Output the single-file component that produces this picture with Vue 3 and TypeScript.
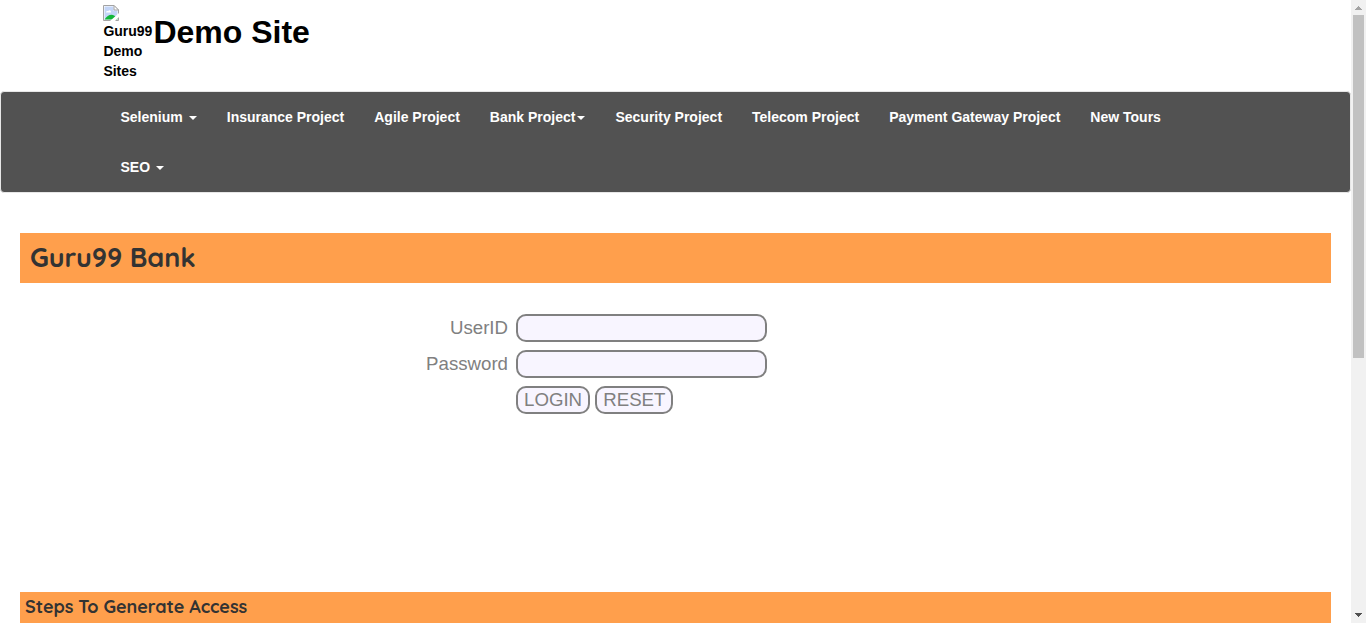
<script setup lang="ts">
import { ref } from 'vue'

interface NavItem {
  label: string
  caret?: 'spaced' | 'tight'
}

const navItems: NavItem[] = [
  { label: 'Selenium', caret: 'spaced' },
  { label: 'Insurance Project' },
  { label: 'Agile Project' },
  { label: 'Bank Project', caret: 'tight' },
  { label: 'Security Project' },
  { label: 'Telecom Project' },
  { label: 'Payment Gateway Project' },
  { label: 'New Tours' },
  { label: 'SEO', caret: 'spaced' },
]

const userId = ref('')
const password = ref('')

function reset(): void {
  userId.value = ''
  password.value = ''
}
</script>

<template>
  <div class="viewport">
    <div class="page">
      <header class="masthead">
        <div class="logo">
          <svg class="logo-icon" width="16" height="16" viewBox="0 0 16 16">
            <path d="M.5.5H11L15.500 5V15.500H.5Z" fill="#fff" stroke="#a3a3a3" />
            <path d="M1.500 1.500H10.500V5.500H14.500V14.500H1.500Z" fill="#c3d5f7" />
            <path d="M3 7.500C3 5.800 5 5.800 5.300 6.200C5.800 4.700 8.200 5 8 7.500Z" fill="#fff" />
            <path d="M1.500 14.500C3.500 11.500 6 9.700 8.500 9.700C10.500 9.700 12.500 11.200 14.500 13V14.500Z" fill="#12b73b" />
            <path d="M7 16L16 8V12L12 16Z" fill="#fff" />
            <path d="M11 .5V5H15.500Z" fill="#fff" stroke="#a3a3a3" />
          </svg>
          <span class="logo-text">Guru99 Demo Sites</span>
        </div>
        <h1 class="site-title">Demo Site</h1>
      </header>

      <nav class="navbar">
        <ul class="nav-list">
          <li v-for="item in navItems" :key="item.label">
            <a class="nav-link">{{ item.label }}<i v-if="item.caret" class="caret" :class="item.caret"></i></a>
          </li>
        </ul>
      </nav>

      <h2 class="bar bank-title"><span>Guru99 Bank</span></h2>

      <form class="login" @submit.prevent>
        <label for="uid">UserID</label>
        <input id="uid" v-model="userId" type="text" />
        <label for="pwd">Password</label>
        <input id="pwd" v-model="password" type="password" />
        <div class="actions">
          <button type="submit">LOGIN</button>
          <button type="button" @click="reset">RESET</button>
        </div>
      </form>

      <h4 class="bar steps-title"><span>Steps To Generate Access</span></h4>
    </div>

    <div class="scrollbar">
      <svg class="arrow" width="15" height="15" viewBox="0 0 15 15" shape-rendering="crispEdges">
        <path d="M7 6h1v1h1v1h1v1h1v1H4V9h1V8h1V7h1z" fill="#a3a3a3" />
      </svg>
      <div class="thumb"></div>
      <svg class="arrow" width="15" height="15" viewBox="0 0 15 15" shape-rendering="crispEdges">
        <path d="M4 5h7v1h-1v1h-1v1h-1v1h-1v-1h-1v-1h-1v-1h-1z" fill="#505050" />
      </svg>
    </div>
  </div>
</template>

<style>
body {
  overflow: hidden;
  background: #fff;
}
</style>

<style scoped>
* {
  box-sizing: border-box;
}

.viewport {
  display: flex;
  height: 623px;
  overflow: hidden;
  font-family: "Liberation Sans", Arial, sans-serif;
  font-size: 14px;
  line-height: 20px;
}

.page {
  flex: 1;
  min-width: 0;
}

.masthead {
  display: flex;
  height: 91px;
  padding: 5px 0 0 103.4px;
  color: #000;
}

.logo {
  width: 50px;
  font-weight: 700;
}

.logo-icon {
  display: block;
  margin-left: -0.4px;
}

.logo-text {
  display: block;
}

.site-title {
  margin: 10px 0 0;
  font-size: 32px;
  line-height: 35px;
  font-weight: 700;
}

.navbar {
  height: 102px;
  border: 1px solid #e7e7e7;
  border-radius: 4px;
  background: #525252;
}

.nav-list {
  display: flex;
  flex-wrap: wrap;
  width: 1140px;
  margin: 0 auto;
  padding: 0;
  list-style: none;
}

.nav-link {
  display: block;
  padding: 15px;
  color: #fff;
  font-weight: 700;
  white-space: nowrap;
}

.caret {
  display: inline-block;
  margin-left: 2px;
  border-top: 4px solid #fff;
  border-right: 4px solid transparent;
  border-left: 4px solid transparent;
  vertical-align: middle;
}

.caret.spaced {
  margin-left: 6px;
}

.bar {
  margin: 0 20px;
  background: #ff9f4c;
  color: #333;
  font-family: Quicksand, Lato, sans-serif;
  font-weight: 700;
}

.bank-title {
  height: 50px;
  margin-top: 40px;
  padding-left: 10px;
  font-size: 27px;
  line-height: 49px;
  letter-spacing: -0.1px;
}

.login {
  display: grid;
  grid-template-columns: 508px 251px;
  grid-auto-rows: 28px;
  gap: 8px;
  height: 309px;
  padding-top: 31px;
  color: #808080;
  font-size: 18.667px;
  line-height: 28px;
}

.login label {
  text-align: right;
}

.login input,
.login button {
  height: 28px;
  margin: 0;
  border: 2px solid #808080;
  border-radius: 10px;
  background: #f8f5ff;
  color: #808080;
  font: inherit;
  line-height: 22px;
  outline: none;
}

.login input {
  width: 251px;
  padding: 1px 6px;
}

.login button {
  padding: 1px 6px;
}

.actions {
  display: flex;
  grid-column: 2;
  gap: 5.2px;
}

.steps-title {
  height: 31px;
  padding-left: 5px;
  font-size: 18px;
  line-height: 29px;
  letter-spacing: -0.06px;
}

.scrollbar {
  display: flex;
  flex-direction: column;
  width: 15px;
  background: #f1f1f1;
}

.arrow {
  display: block;
  flex: none;
}

.thumb {
  width: 11px;
  height: 343px;
  margin: 0 2px auto;
  background: #c1c1c1;
}
</style>
